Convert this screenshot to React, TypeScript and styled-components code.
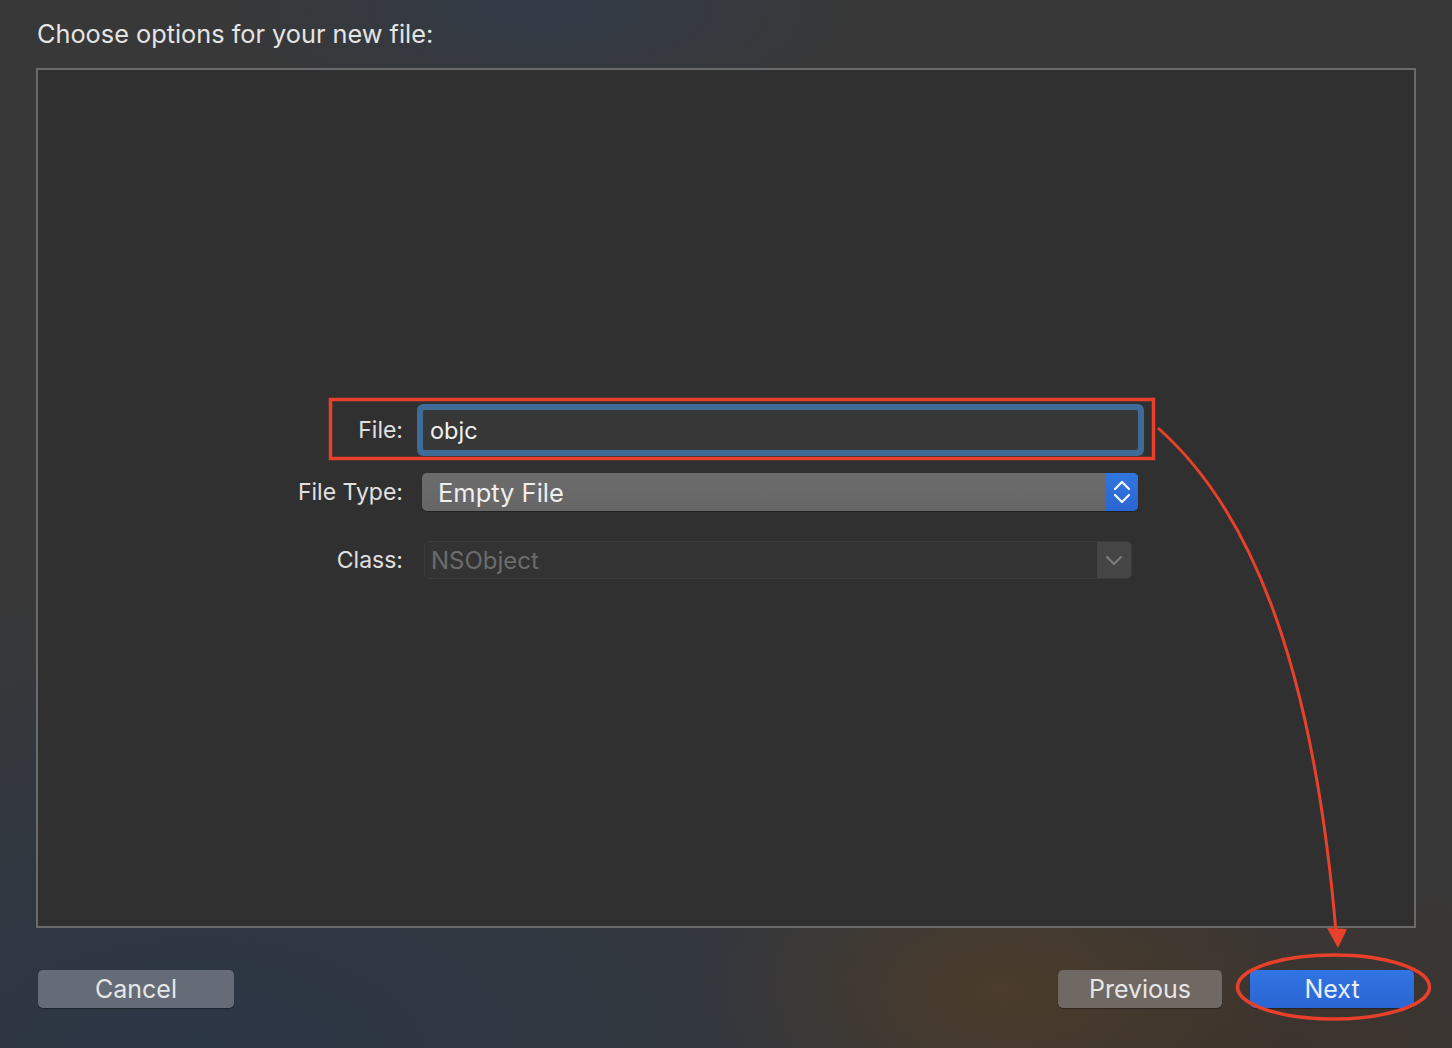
import React from "react";
import styled, { createGlobalStyle } from "styled-components";

const GlobalStyle = createGlobalStyle`
  html, body { margin: 0; padding: 0; }
  body { font-family: Inter, "Noto Sans", "Liberation Sans", sans-serif; -webkit-font-smoothing: antialiased; }
  * { box-sizing: border-box; }
`;

const Window = styled.div`
  position: relative;
  width: 1452px;
  height: 1048px;
  overflow: hidden;
  display: flex;
  flex-direction: column;
  padding: 0 36px;
  background:
    radial-gradient(ellipse 300px 170px at 1000px 990px, rgba(76, 60, 42, 0.95), rgba(76, 60, 42, 0) 100%),
    radial-gradient(ellipse 420px 200px at 1250px 1060px, rgba(62, 50, 42, 0.9), rgba(62, 50, 42, 0) 100%),
    radial-gradient(ellipse 900px 480px at 200px 1060px, rgba(43, 54, 70, 1), rgba(43, 54, 70, 0) 100%),
    radial-gradient(ellipse 320px 110px at 540px 10px, rgba(50, 59, 73, 0.9), rgba(50, 59, 73, 0) 100%),
    #383838;
`;

const Title = styled.h1`
  margin: 0;
  padding: 17px 0 0 1px;
  height: 68px;
  font-size: 25.3px;
  line-height: 34px;
  font-weight: 400;
  color: #e4e4e4;
`;

const Panel = styled.div`
  height: 860px;
  border: 2px solid #6a6a6a;
  background: #303030;
  padding-top: 340px;
  display: flex;
  flex-direction: column;
`;

const Row = styled.div<{ $top: number; $h: number }>`
  display: flex;
  align-items: center;
  gap: 20px;
  height: ${(p) => p.$h}px;
  margin-top: ${(p) => p.$top}px;
`;

const Label = styled.span`
  width: 365px;
  text-align: right;
  font-size: 23px;
  color: #e0e0e0;
  line-height: 1;
`;

const TextField = styled.div`
  width: 715px;
  height: 40px;
  background: #373737;
  box-shadow: 0 0 0 6px #3f6b98;
  border-radius: 2px;
  display: flex;
  align-items: center;
  padding-left: 7px;
  font-size: 23.5px;
  color: #f0f0f0;
`;

const Popup = styled.div<{ $disabled?: boolean }>`
  height: 38px;
  border-radius: 5px;
  display: flex;
  align-items: stretch;
  overflow: hidden;
  background: ${(p) => (p.$disabled ? "#333333" : "linear-gradient(180deg, #6c6c6c, #666666)")};
  border: ${(p) => (p.$disabled ? "1px solid #3b3b3b" : "none")};
  width: ${(p) => (p.$disabled ? "708px" : "716px")};
  margin-left: ${(p) => (p.$disabled ? "1px" : "-1px")};
  box-shadow: ${(p) => (p.$disabled ? "none" : "0 1px 1px rgba(0,0,0,0.35)")};
`;

const PopupText = styled.span<{ $disabled?: boolean }>`
  flex: 1;
  display: flex;
  align-items: center;
  padding-left: ${(p) => (p.$disabled ? "6px" : "16px")};
  font-size: ${(p) => (p.$disabled ? "24px" : "25.5px")};
  color: ${(p) => (p.$disabled ? "#6c6c6c" : "#efefef")};
`;

const PopupArrow = styled.span<{ $disabled?: boolean }>`
  width: ${(p) => (p.$disabled ? "34px" : "32px")};
  display: flex;
  align-items: center;
  justify-content: center;
  background: ${(p) => (p.$disabled ? "#454545" : "linear-gradient(180deg, #3176e0, #2a66d2)")};
`;

const Footer = styled.div`
  display: flex;
  align-items: center;
  padding: 42px 2px 0 2px;
  gap: 28px;
`;

const Spacer = styled.div`
  flex: 1;
`;

const Button = styled.button<{ $tone: "cancel" | "prev" | "next"; $w: number }>`
  width: ${(p) => p.$w}px;
  height: 38px;
  border: none;
  border-radius: 5px;
  font-family: inherit;
  font-size: 25px;
  color: ${(p) => (p.$tone === "next" ? "#e8eefb" : "#e6e6e6")};
  background: ${(p) =>
    p.$tone === "cancel" ? "#656c77" : p.$tone === "prev" ? "#706963" : "linear-gradient(180deg, #3174e2, #2a66d4)"};
  box-shadow: 0 1px 1px rgba(0, 0, 0, 0.35);
  padding: 0;
  line-height: 38px;
`;

const Annotations = styled.svg`
  position: absolute;
  left: 0;
  top: 0;
  pointer-events: none;
`;

export default function App() {
  return (
    <>
      <GlobalStyle />
      <Window>
        <Title>Choose options for your new file:</Title>
        <Panel>
          <Row $top={0} $h={40}>
            <Label>File:</Label>
            <TextField>objc</TextField>
          </Row>
          <Row $top={23} $h={38}>
            <Label>File Type:</Label>
            <Popup>
              <PopupText>Empty File</PopupText>
              <PopupArrow>
                <svg width="18" height="26" viewBox="0 0 18 26">
                  <path d="M2 10 L9 3 L16 10" fill="none" stroke="#f4f7ff" strokeWidth="2.2" strokeLinecap="round" strokeLinejoin="round" />
                  <path d="M2 16 L9 23 L16 16" fill="none" stroke="#f4f7ff" strokeWidth="2.2" strokeLinecap="round" strokeLinejoin="round" />
                </svg>
              </PopupArrow>
            </Popup>
          </Row>
          <Row $top={30} $h={38}>
            <Label>Class:</Label>
            <Popup $disabled>
              <PopupText $disabled>NSObject</PopupText>
              <PopupArrow $disabled>
                <svg width="18" height="12" viewBox="0 0 18 12">
                  <path d="M2 3 L9 10 L16 3" fill="none" stroke="#7a7a7a" strokeWidth="2.2" strokeLinecap="round" strokeLinejoin="round" />
                </svg>
              </PopupArrow>
            </Popup>
          </Row>
        </Panel>
        <Footer>
          <Button $tone="cancel" $w={196}>Cancel</Button>
          <Spacer />
          <Button $tone="prev" $w={164}>Previous</Button>
          <Button $tone="next" $w={164}>Next</Button>
        </Footer>
        <Annotations width="1452" height="1048" viewBox="0 0 1452 1048">
          <rect x="330.5" y="399.5" width="823" height="59" fill="none" stroke="#e8402a" strokeWidth="3.5" />
          <path d="M1158 428 C1245 505 1312 650 1336 932" fill="none" stroke="#e8402a" strokeWidth="3" />
          <polygon points="1327,928 1347,929 1338,948" fill="#e8402a" />
          <ellipse cx="1333.5" cy="987" rx="96" ry="32" fill="none" stroke="#e8402a" strokeWidth="3.5" />
        </Annotations>
      </Window>
    </>
  );
}
